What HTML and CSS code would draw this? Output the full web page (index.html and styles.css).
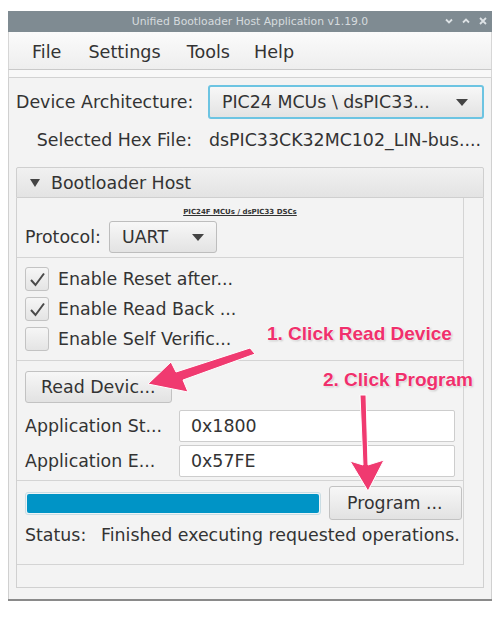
FILE: index.html
```html
<!DOCTYPE html>
<html>
<head>
<meta charset="utf-8">
<link rel="stylesheet" href="styles.css">
</head>
<body>
<div class="page">
  <div class="window">
    <div class="titlebar">
      <span class="title">Unified Bootloader Host Application v1.19.0</span>
      <div class="wbtns">
        <svg width="10" height="8" viewBox="0 0 10 8"><path d="M2 2.5 L5 5.5 L8 2.5" fill="none" stroke="#dde2e5" stroke-width="1.8"/></svg>
        <svg width="10" height="8" viewBox="0 0 10 8"><path d="M2 5.5 L5 2.5 L8 5.5" fill="none" stroke="#dde2e5" stroke-width="1.8"/></svg>
        <svg width="10" height="8" viewBox="0 0 10 8"><path d="M2 1 L8 7 M8 1 L2 7" fill="none" stroke="#dde2e5" stroke-width="1.8"/></svg>
      </div>
    </div>
    <div class="menubar">
      <span class="menu m1">File</span>
      <span class="menu m2">Settings</span>
      <span class="menu m3">Tools</span>
      <span class="menu">Help</span>
    </div>
    <div class="strip"></div>
    <div class="content">
      <div class="topgrid">
        <span class="lbl">Device Architecture:</span>
        <div class="combo focused">
          <span>PIC24 MCUs \ dsPIC33...</span>
          <svg class="caret" width="12" height="7" viewBox="0 0 12 7"><path d="M0 0 H12 L6 7 Z" fill="#444"/></svg>
        </div>
        <span class="lbl right">Selected Hex File:</span>
        <span class="val">dsPIC33CK32MC102_LIN-bus....</span>
      </div>

      <div class="tpane">
        <div class="thead">
          <svg width="10" height="8" viewBox="0 0 10 8"><path d="M0 0 H10 L5 8 Z" fill="#444"/></svg>
          <span>Bootloader Host</span>
        </div>
        <div class="tbody">
          <div class="inner">
            <div class="caption">PIC24F MCUs / dsPIC33 DSCs</div>
            <div class="protorow">
              <span>Protocol:</span>
              <div class="combo small">
                <span>UART</span>
                <svg class="caret" width="12" height="7" viewBox="0 0 12 7"><path d="M0 0 H12 L6 7 Z" fill="#444"/></svg>
              </div>
            </div>
            <div class="sep"></div>
            <div class="checks">
              <label class="chk"><span class="box"><svg width="17" height="15" viewBox="0 0 17 15"><path d="M2 8 L6.5 13 L15 1.5" fill="none" stroke="#4a4a4a" stroke-width="2"/></svg></span>Enable Reset after...</label>
              <label class="chk"><span class="box"><svg width="17" height="15" viewBox="0 0 17 15"><path d="M2 8 L6.5 13 L15 1.5" fill="none" stroke="#4a4a4a" stroke-width="2"/></svg></span>Enable Read Back ...</label>
              <label class="chk"><span class="box"></span>Enable Self Verific...</label>
            </div>
            <div class="sep"></div>
            <div class="actions">
              <div class="btn readbtn">Read Devic...</div>
              <div class="frow"><span class="flbl">Application St...</span><div class="field">0x1800</div></div>
              <div class="frow"><span class="flbl">Application E...</span><div class="field">0x57FE</div></div>
            </div>
            <div class="sep"></div>
            <div class="progrow">
              <div class="progress"><div class="fill"></div></div>
              <div class="btn progbtn">Program ...</div>
            </div>
            <div class="status"><span class="slbl">Status:</span><span>Finished executing requested operations.</span></div>
          </div>
        </div>
      </div>
    </div>
  </div>

  <svg class="arrows" width="500" height="617" viewBox="0 0 500 617">
    <path d="M250 348 L255 354 L183 380 L188 392 L148 384 L171 362 L176 372 Z" fill="#f03a70" stroke="#fff" stroke-width="1" stroke-linejoin="round"/>
    <path d="M360 395 L366 395 L368 465 L384 460 L368 491 L350 461 L363 465 Z" fill="#f03a70" stroke="#fff" stroke-width="1" stroke-linejoin="round"/>
  </svg>
  <div class="note n1">1. Click Read Device</div>
  <div class="note n2">2. Click Program</div>
</div>
</body>
</html>
```

FILE: styles.css
```css
* { box-sizing: border-box; }
html, body { margin: 0; padding: 0; background: #ffffff; }
body { font-family: "DejaVu Sans", sans-serif; color: #333; }

.page { position: relative; width: 500px; height: 617px; padding-top: 11px; }

.window {
  margin: 0 8px;
  width: 484px;
  height: 590px;
  display: flex;
  flex-direction: column;
  border-bottom: 2px solid #8a8a8a;
  background: #f3f3f3;
}

.titlebar {
  height: 21px;
  background: #7f8b92;
  position: relative;
  display: flex;
  align-items: center;
  justify-content: center;
}
.title { color: #d6dbde; font-size: 10.8px; }
.wbtns { position: absolute; right: 4px; top: 6px; display: flex; gap: 7px; }

.menubar {
  height: 38px;
  background: linear-gradient(#fbfbfb, #eeeeee);
  border-bottom: 1px solid #c9c9c9;
  border-left: 1px solid #d6d6d6;
  border-right: 1px solid #d6d6d6;
  display: flex;
  align-items: center;
  padding-left: 23px;
  padding-top: 3px;
}
.menu { font-size: 17.6px; color: #333; }
.m1 { margin-right: 27px; }
.m2 { margin-right: 26px; }
.m3 { margin-right: 24px; }

.strip {
  height: 8px;
  background: #f8f8f8;
  border-bottom: 1px solid #d2d2d2;
  border-left: 1px solid #d6d6d6;
  border-right: 1px solid #d6d6d6;
}

.content {
  flex: 1;
  border-left: 1px solid #d0d0d0;
  border-right: 1px solid #d0d0d0;
  padding: 7px 7px 0 7px;
  display: flex;
  flex-direction: column;
}

.topgrid {
  display: grid;
  grid-template-columns: 176px 276px;
  column-gap: 16px;
  row-gap: 7px;
  align-items: center;
}
.lbl { font-size: 17.4px; white-space: nowrap; }
.lbl.right { text-align: right; }
.val { font-size: 17.4px; white-space: nowrap; padding-left: 1px; }

.combo {
  height: 34px;
  border: 1px solid #bdbdbd;
  border-radius: 3px;
  background: linear-gradient(#f7f7f7, #e3e3e3);
  display: flex;
  align-items: center;
  justify-content: space-between;
  padding: 0 14px 0 13px;
  font-size: 17.4px;
}
.combo.focused { border: 2px solid #6cc4e2; padding-left: 12px; }
.combo.small { width: 108px; height: 32px; padding: 0 12px 0 12px; font-size: 17.4px; }
.topgrid > :nth-child(3), .topgrid > :nth-child(4) { height: 28px; display: flex; align-items: center; }
.topgrid > .lbl.right { justify-content: flex-end; }

.tpane { margin-top: 13px; display: flex; flex-direction: column; }
.thead {
  height: 31px;
  border: 1px solid #cfcfcf;
  border-radius: 2px 2px 0 0;
  background: linear-gradient(#f1f1f1, #e3e3e3);
  display: flex;
  align-items: center;
  padding-left: 13px;
  gap: 11px;
  font-size: 17.4px;
}
.tbody {
  height: 390px;
  border: 1px solid #d0d0d0;
  border-top: none;
  background: #f3f3f3;
}
.inner {
  width: 447px;
  height: 367px;
  border-right: 1px solid #d4d4d4;
  border-bottom: 1px solid #d4d4d4;
  padding: 0 0 0 8px;
  display: flex;
  flex-direction: column;
}
.caption {
  font-size: 7px;
  font-weight: bold;
  text-decoration: underline;
  text-align: center;
  margin-top: 9px;
  height: 10px;
  line-height: 10px;
  color: #333;
  padding-right: 8px;
}
.protorow {
  margin-top: 4px;
  display: flex;
  align-items: center;
  gap: 8px;
  font-size: 17.4px;
  height: 32px;
}
.sep { height: 1px; background: #d4d4d4; margin-left: -8px; flex-shrink: 0; }
.protorow + .sep { margin-top: 4px; }

.checks { display: flex; flex-direction: column; gap: 6px; padding-top: 9px; padding-bottom: 9px; }
.chk { display: flex; align-items: center; gap: 9px; font-size: 17.4px; height: 24px; }
.box {
  width: 24px; height: 24px;
  border: 1px solid #c3c3c3;
  border-radius: 3px;
  background: linear-gradient(#f6f6f6, #e4e4e4);
  display: flex; align-items: center; justify-content: center;
}

.actions { display: flex; flex-direction: column; padding-top: 10px; gap: 3px; padding-bottom: 3px; }
.btn {
  height: 32px;
  border: 1px solid #c2c2c2;
  border-radius: 3px;
  background: linear-gradient(#f7f7f7, #e2e2e2);
  display: flex; align-items: center;
  font-size: 17.4px;
}
.readbtn { width: 147px; padding-left: 15px; margin-bottom: 4px; }
.frow { display: flex; align-items: center; height: 32px; }
.flbl { width: 154px; font-size: 17.4px; white-space: nowrap; }
.field {
  width: 276px; height: 32px;
  background: #fff;
  border: 1px solid #cdcdcd;
  border-radius: 2px;
  display: flex; align-items: center;
  padding-left: 11px;
  font-size: 17.4px;
}

.progrow { display: flex; align-items: center; margin-top: 5px; height: 34px; }
.progress {
  width: 296px; height: 23px;
  border: 1px solid #c9dde4;
  border-radius: 3px;
  padding: 1px;
  background: #eef4f6;
}
.fill { width: 100%; height: 100%; background: #0094c6; border-radius: 2px; }
.progbtn { width: 133px; margin-left: 8px; padding-left: 17px; height: 34px; }

.status { margin-top: 5px; font-size: 17.4px; display: flex; white-space: nowrap; }
.slbl { width: 76px; }

.arrows { position: absolute; left: 0; top: 0; pointer-events: none; }
.note {
  position: absolute;
  font-family: "Liberation Sans", Arial, sans-serif;
  font-weight: bold;
  font-size: 19px;
  color: #f0306c;
  white-space: nowrap;
  text-shadow: 0 0 2px #fff, 0 0 2px #fff, 1px 1px 2px rgba(0,0,0,0.25);
}
.n1 { left: 267px; top: 323px; }
.n2 { left: 323px; top: 369px; }
```
